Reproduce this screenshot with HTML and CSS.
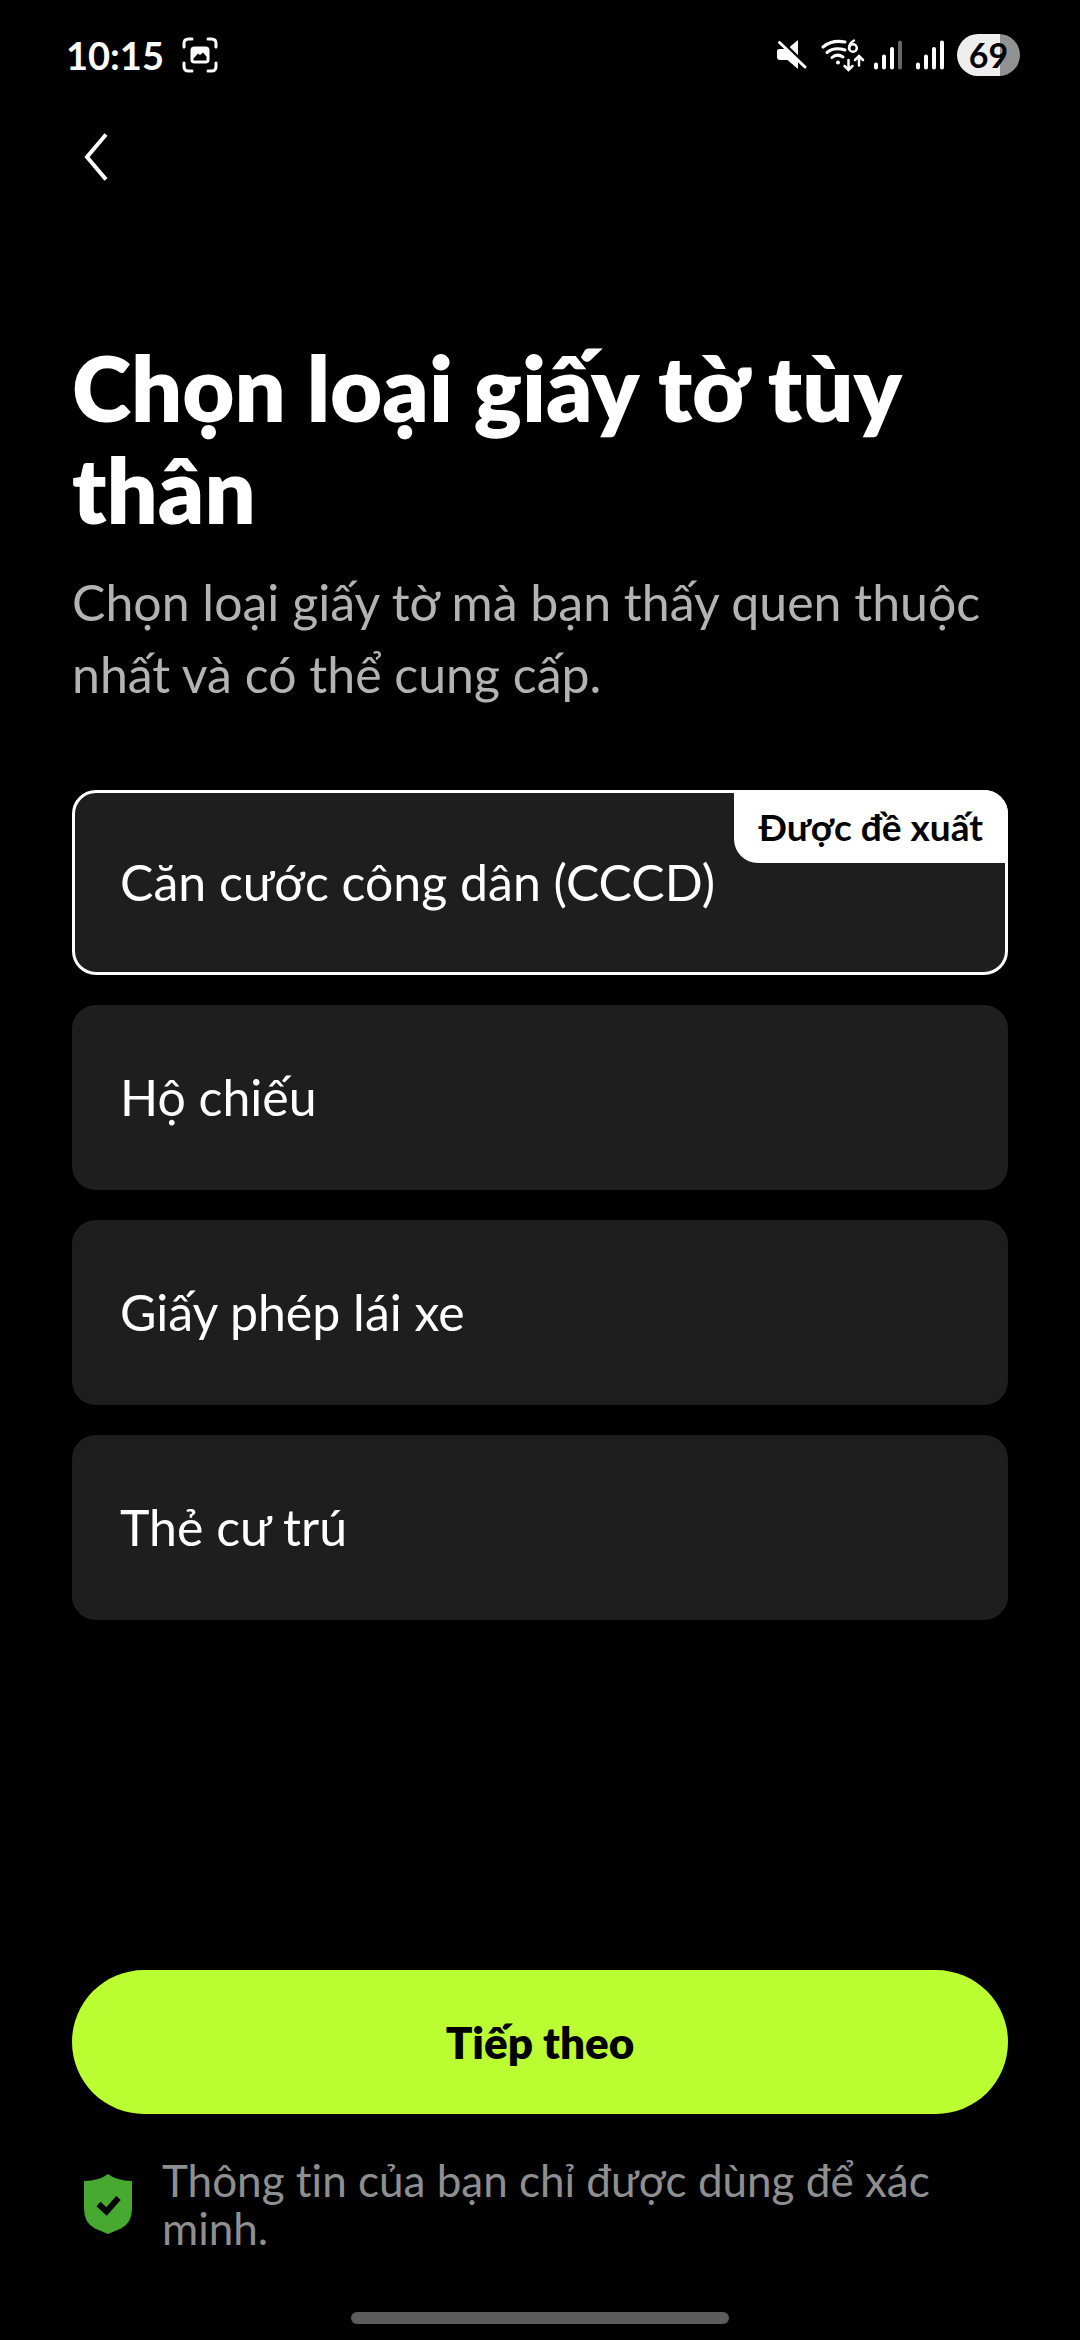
FILE: index.html
```html
<!DOCTYPE html>
<html lang="vi">
<head>
  <meta charset="utf-8">
  <meta name="viewport" content="width=device-width, initial-scale=1">
  <title>Chọn loại giấy tờ tùy thân</title>
  <link rel="stylesheet" href="styles.css">
</head>
<body>
  <div class="screen">
    <header class="status">
      <div class="status-group">
        <time class="clock">10:15</time>
        <svg class="icon-capture" viewBox="0 0 36 36" aria-hidden="true">
          <path d="M2 10V6.500Q2 2 6.500 2H10M26 2h3.500Q34 2 34 6.500V10M34 26v3.500Q34 34 29.500 34H26M10 34H6.500Q2 34 2 29.500V26" fill="none" stroke="#fff" stroke-width="3" stroke-linecap="round"/>
          <path fill="#fff" fill-rule="evenodd" d="M12.500 9.500h11a4 4 0 0 1 4 4v9a4 4 0 0 1-4 4h-11a4 4 0 0 1-4-4v-9a4 4 0 0 1 4-4zM11.500 23.500h13v-4l-3.500-4-3 2.500-2-1.500-4.500 5z"/>
        </svg>
      </div>
      <div class="status-group">
        <svg class="icon-mute" viewBox="0 0 32 32" aria-hidden="true">
          <path fill="#fff" d="M13 8.500L22 1v16.500zM3 10h7L22 22v8L11.500 21H4a3 3 0 0 1-3-3v-5.500Q1 10 3 10z"/>
          <path d="M6 2.500L31 27" stroke="#000" stroke-width="3"/>
          <path d="M3.500 3.500L29 28" stroke="#fff" stroke-width="3" stroke-linecap="round"/>
        </svg>
        <svg class="icon-wifi" viewBox="0 0 41 34" aria-hidden="true">
          <g fill="none" stroke="#fff" stroke-width="3" stroke-linecap="round">
            <path d="M3 9Q12 1.500 25 4M7 14.500Q14 8.500 25 12M12 19.500Q17 15 23 19"/>
            <path d="M34 2.500Q29 5 29 10.500" stroke-width="2.500"/>
            <circle cx="33" cy="10" r="3.800" stroke-width="2.500"/>
            <path d="M28.500 22v9.500M24.500 28l4 4 4-4M39 27.500V19M35 22l4-4 4 4" stroke-width="2.500"/>
          </g>
          <circle cx="18" cy="24.500" r="2" fill="#fff"/>
        </svg>
        <svg class="icon-signal" viewBox="0 0 30 30" aria-hidden="true">
          <path d="M3 24.500v3M11 16.500v11M19 9v18.500" stroke="#fff" stroke-width="4" stroke-linecap="round"/>
          <path d="M27 2.500v25" stroke="#666" stroke-width="4" stroke-linecap="round"/>
        </svg>
        <svg class="icon-signal" viewBox="0 0 30 30" aria-hidden="true">
          <path d="M3 24.500v3M11 16.500v11M19 9v18.500M27 2.500v25" stroke="#fff" stroke-width="4" stroke-linecap="round"/>
        </svg>
        <span class="battery" style="--level: 69%">69</span>
      </div>
    </header>

    <nav class="nav">
      <button class="back" type="button" aria-label="Quay lại">
        <svg viewBox="0 0 24 48" aria-hidden="true">
          <path d="M22 1.500L3 24l19 22.500" fill="none" stroke="#fff" stroke-width="4"/>
        </svg>
      </button>
    </nav>

    <main class="content">
      <h1 class="title">Chọn loại giấy tờ tùy thân</h1>
      <p class="subtitle">Chọn loại giấy tờ mà bạn thấy quen thuộc nhất và có thể cung cấp.</p>
      <form class="options" id="document-form">
        <label class="option">
          <input class="option-input" type="radio" name="document" value="cccd" checked>
          <span>Căn cước công dân (CCCD)</span>
          <span class="badge">Được đề xuất</span>
        </label>
        <label class="option">
          <input class="option-input" type="radio" name="document" value="passport">
          <span>Hộ chiếu</span>
        </label>
        <label class="option">
          <input class="option-input" type="radio" name="document" value="license">
          <span>Giấy phép lái xe</span>
        </label>
        <label class="option">
          <input class="option-input" type="radio" name="document" value="residence">
          <span>Thẻ cư trú</span>
        </label>
      </form>
    </main>

    <footer class="footer">
      <button class="next" type="submit" form="document-form">Tiếp theo</button>
      <div class="note">
        <svg class="icon-shield" viewBox="0 0 48 60" aria-hidden="true">
          <path fill="#47a930" d="M24 0Q33 7 48 7v28q0 14-11 19.500L24 60 11 54.500Q0 49 0 35V7Q15 7 24 0z"/>
          <path d="M14.500 30l8 7.500L34.500 24" fill="none" stroke="#000" stroke-width="6"/>
        </svg>
        <p class="note-text">Thông tin của bạn chỉ được dùng để xác minh.</p>
      </div>
    </footer>
    <div class="home-bar"></div>
  </div>
</body>
</html>
```

FILE: styles.css
```css
* {
  box-sizing: border-box;
}

body {
  margin: 0;
  background: #000;
  color: #fff;
  font-family: Lato, "Noto Sans", sans-serif;
  font-variant-ligatures: none;
}

.screen {
  display: flex;
  flex-direction: column;
  min-height: 100vh;
  padding-bottom: 16px;
}

.status {
  display: flex;
  justify-content: space-between;
  align-items: center;
  height: 110px;
  padding: 0 60px 0 66px;
}

.status-group {
  display: flex;
  align-items: center;
  gap: 12px;
}

.clock {
  margin-right: 6px;
  font-size: 38px;
  font-weight: 700;
}

.icon-capture {
  width: 36px;
  height: 36px;
}

.icon-mute {
  width: 32px;
  height: 32px;
}

.icon-wifi {
  width: 41px;
  height: 34px;
  overflow: visible;
}

.icon-signal {
  width: 30px;
  height: 30px;
}

.battery {
  width: 63px;
  height: 42px;
  border-radius: 21px;
  background: linear-gradient(to right, #eee var(--level), #929292 var(--level));
  color: #000;
  font-size: 34px;
  font-weight: 700;
  line-height: 42px;
  text-align: center;
}

.nav {
  display: flex;
  padding: 0 60px;
}

.back {
  display: flex;
  padding: 23px 24px;
  border: 0;
  background: none;
}

.back svg {
  width: 24px;
  height: 48px;
}

.content {
  flex: 1;
  padding: 132px 72px 48px;
}

.title {
  margin: 0;
  font-size: 90px;
  font-weight: 800;
  line-height: 102px;
}

.subtitle {
  margin: 26px 0 80px;
  color: #b3b3b3;
  font-size: 50px;
  line-height: 72px;
}

.options {
  display: flex;
  flex-direction: column;
  gap: 30px;
}

.option {
  position: relative;
  padding: 57px 45px;
  border: 3px solid #1e1e1e;
  border-radius: 24px;
  background: #1e1e1e;
  font-size: 50px;
  line-height: 65px;
}

.option:has(:checked) {
  border-color: #fff;
}

.option-input {
  position: absolute;
  opacity: 0;
}

.badge {
  position: absolute;
  top: -3px;
  right: -3px;
  padding: 0 25px;
  border-radius: 0 24px;
  background: #fff;
  color: #000;
  font-size: 37px;
  font-weight: 700;
  line-height: 73px;
}

.footer {
  padding: 0 72px;
}

.next {
  display: block;
  width: 100%;
  padding: 42px;
  border: 0;
  border-radius: 72px;
  background: #bbff33;
  color: #000;
  font: inherit;
  font-size: 44px;
  font-weight: 800;
  line-height: 60px;
}

.note {
  display: flex;
  align-items: center;
  gap: 30px;
  padding: 42px 12px 60px;
}

.icon-shield {
  flex: none;
  width: 48px;
  height: 60px;
}

.note-text {
  margin: 0;
  color: #8f8f8f;
  font-size: 44px;
  line-height: 48px;
}

.home-bar {
  align-self: center;
  width: 35%;
  height: 12px;
  border-radius: 6px;
  background: #5c5c5c;
}
```
